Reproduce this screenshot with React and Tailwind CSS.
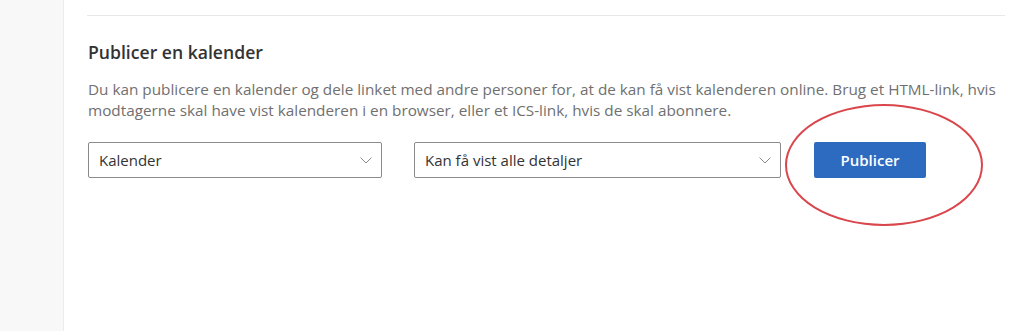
import React from "react";

const Chevron = () => (
  <svg viewBox="0 0 12 7" className="w-[12px] h-[7px]" aria-hidden>
    <path d="M0.5 0.5l5.5 5.5 5.5-5.5" fill="none" stroke="#8a8a8a" strokeWidth="1" />
  </svg>
);

const Select = ({ value, className }) => (
  <div className={`h-[36px] flex items-center justify-between border border-[#8a8a8a] rounded-[2px] pl-[10px] pr-[9px] bg-white ${className}`}>
    <span className="text-[15px] text-[#333]">{value}</span>
    <Chevron />
  </div>
);

export default function App() {
  return (
    <div className="w-[1024px] h-[331px] flex bg-white overflow-hidden" style={{ fontFamily: '"Open Sans", "Noto Sans", sans-serif' }}>
      <aside className="w-[64px] shrink-0 bg-[#f8f8f8] border-r border-[#ececec]" />
      <main className="flex-1 pl-[23px] pr-[19px]">
        <div className="h-[16px] border-b border-[#e8e8e8]" />
        <div className="pl-[1px]">
          <h2 className="mt-[24px] text-[17.6px] font-semibold text-[#333] leading-[24px]">Publicer en kalender</h2>
          <p className="mt-[15px] text-[15.3px] leading-[21px] text-[#707070]">
            Du kan publicere en kalender og dele linket med andre personer for, at de kan få vist kalenderen online. Brug et HTML-link, hvis modtagerne skal have vist kalenderen i en browser, eller et ICS-link, hvis de skal abonnere.
          </p>
          <div className="mt-[21px] flex items-center">
            <Select value="Kalender" className="w-[294px]" />
            <Select value="Kan få vist alle detaljer" className="w-[367px] ml-[32px]" />
            <div className="relative ml-[33px]">
              <button className="w-[112px] h-[36px] bg-[#2d6bc1] rounded-[2px] text-white text-[15px] font-semibold">
                Publicer
              </button>
              <div className="absolute left-[-29px] top-[-38px] w-[198px] h-[122px] rounded-[50%] border-2 border-[#d9474d] pointer-events-none" />
            </div>
          </div>
        </div>
      </main>
    </div>
  );
}
